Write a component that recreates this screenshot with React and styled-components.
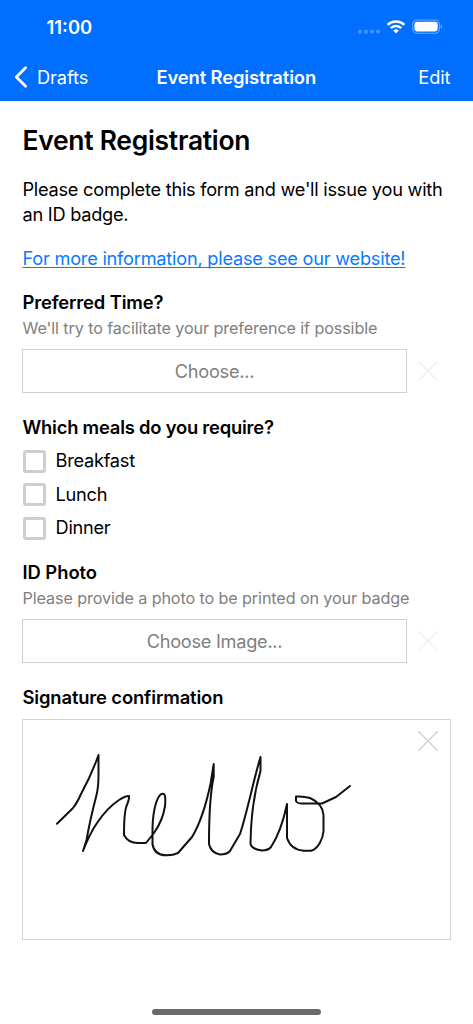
import styled, { createGlobalStyle } from 'styled-components'

const GlobalStyle = createGlobalStyle`
  * {
    box-sizing: border-box;
  }

  body {
    margin: 0;
    background: #fff;
    color: #000;
    font-family: Inter, "Liberation Sans", sans-serif;
  }

  button {
    font-family: inherit;
    margin: 0;
  }
`

const Screen = styled.div`
  width: 473px;
  height: 1024px;
  display: flex;
  flex-direction: column;
  overflow: hidden;
`

const Header = styled.header`
  flex: none;
  height: 101px;
  background: #006eff;
  color: #fff;
`

const StatusBar = styled.div`
  height: 53px;
  padding: 1px 31px 0 46.5px;
  display: flex;
  align-items: center;
  justify-content: space-between;
`

const Clock = styled.span`
  font-size: 18.4px;
  font-weight: 600;
`

const StatusIcons = styled.svg`
  display: block;
  width: 86px;
  height: 20px;
`

const NavBar = styled.nav`
  height: 47px;
  padding: 0 22.5px 0 22px;
  display: grid;
  grid-template-columns: 1fr auto 1fr;
  align-items: center;
`

const NavButton = styled.button`
  display: flex;
  align-items: center;
  gap: 9px;
  justify-self: ${props => (props.$end ? 'end' : 'start')};
  margin-left: ${props => (props.$end ? 0 : '-8px')};
  padding: 0;
  border: 0;
  background: none;
  color: #fff;
  font-size: 18.2px;
  letter-spacing: -0.05px;
`

const NavTitle = styled.span`
  font-size: 18.4px;
  font-weight: 600;
  letter-spacing: -0.12px;
`

const Form = styled.main`
  flex: 1;
  padding: 20px 22px 0 22.5px;
`

const Heading = styled.h1`
  margin: 0 0 18px;
  font-size: 26.4px;
  font-weight: 600;
  line-height: 38px;
  letter-spacing: -0.25px;
`

const Intro = styled.p`
  margin: 0 0 20px;
  font-size: 18.2px;
  line-height: 24.5px;
  white-space: nowrap;
  letter-spacing: -0.25px;
`

const InfoLink = styled.a`
  display: block;
  width: max-content;
  margin-bottom: 20px;
  color: #0a7aff;
  font-size: 18.2px;
  line-height: 24px;
  text-decoration: underline;
  text-decoration-thickness: 1px;
  text-decoration-skip-ink: none;
  text-underline-offset: 2px;
  letter-spacing: -0.23px;
`

const Field = styled.section`
  margin-bottom: ${props => props.$gap ?? 21.5}px;
`

const Label = styled.h2`
  margin: 0;
  font-size: 18.4px;
  font-weight: 600;
  line-height: 24px;
  white-space: nowrap;
  letter-spacing: ${props => props.$track ?? -0.14}px;
`

const Hint = styled.p`
  margin: 3.3px 0 10.2px;
  color: #808080;
  font-size: 16.2px;
  line-height: 22px;
  white-space: nowrap;
  letter-spacing: -0.12px;
`

const PickerRow = styled.div`
  display: flex;
  align-items: center;
  gap: 10.8px;
  margin-left: -0.5px;
`

const Picker = styled.button`
  width: 385px;
  height: 44px;
  padding: 0;
  border: 1.4px solid #d0d0d0;
  background: #fff;
  color: #808080;
  font-size: 18.2px;
  letter-spacing: -0.27px;
`

const Cross = styled.svg`
  display: block;
  width: 20px;
  height: 20px;
  fill: none;
  stroke: ${props => (props.$faint ? '#efefef' : '#cfcfcf')};
  stroke-width: 1.2;
  stroke-linecap: round;
`

const Options = styled.div`
  margin-top: 5.5px;
`

const Option = styled.label`
  height: 33.5px;
  display: flex;
  align-items: center;
  gap: 10px;
  font-size: 18.2px;
  letter-spacing: -0.25px;
`

const OptionName = styled.span`
  margin-top: -2px;
`

const Checkbox = styled.input`
  appearance: none;
  width: 23px;
  height: 23px;
  margin: 0;
  border: 3px solid #cecece;
  border-radius: 3px;
`

const SignaturePad = styled.div`
  display: flex;
  justify-content: space-between;
  align-items: flex-start;
  width: 429px;
  height: 221px;
  margin: 10px 0 0 -0.5px;
  padding-right: 11.7px;
  border: 1.4px solid #d4d4d4;

  ${Cross} {
    margin-top: 11.5px;
  }
`

const Ink = styled.svg`
  display: block;
  width: 340px;
  height: 160px;
  fill: none;
  stroke: #111;
  stroke-width: 2;
  stroke-linecap: round;
  stroke-linejoin: round;
`

const HomeIndicator = styled.div`
  flex: none;
  width: 169px;
  height: 6px;
  margin: 0 auto 9px;
  border-radius: 3px;
  background: #6a6a6a;
`

const ClearIcon = ({ faint }) => (
  <Cross $faint={faint} viewBox="0 0 20 20">
    <path d="M0.5 0.5 19.5 19.5M19.5 0.5 0.5 19.5" />
  </Cross>
)

const meals = ['Breakfast', 'Lunch', 'Dinner']

const App = () => {
  return (
    <>
      <GlobalStyle />
      <Screen>
        <Header>
          <StatusBar>
            <Clock>11:00</Clock>
            <StatusIcons viewBox="0 0 86 20" fill="#fff">
              <g opacity="0.26">
                <circle cx="4" cy="14.7" r="2.1" />
                <circle cx="10" cy="14.7" r="2.1" />
                <circle cx="16" cy="14.7" r="2.1" />
                <circle cx="22" cy="14.7" r="2.1" />
              </g>
              <g fill="none" stroke="#fff" strokeWidth="2.5">
                <path d="M31.6 7.9a12.1 12.1 0 0 1 16.8 0" />
                <path d="M34.7 11.2a7.6 7.6 0 0 1 10.6 0" />
              </g>
              <path d="M37.1 13.6a4.2 4.2 0 0 1 5.8 0L40 16.6Z" />
              <rect x="56.8" y="3" width="26.6" height="13.2" rx="4" fill="none" stroke="#fff" strokeWidth="1.1" opacity="0.42" />
              <rect x="58.5" y="4.7" width="23.2" height="9.8" rx="2.4" />
              <path d="M84.8 7.3q1.5.6 1.5 2.2t-1.5 2.2Z" opacity="0.45" />
            </StatusIcons>
          </StatusBar>
          <NavBar>
            <NavButton>
              <svg width="14" height="22" viewBox="0 0 14 22" fill="none" stroke="#fff" strokeWidth="2.8" strokeLinecap="round" strokeLinejoin="round">
                <path d="M11.6 1.8 2.4 11l9.2 9.2" />
              </svg>
              Drafts
            </NavButton>
            <NavTitle>Event Registration</NavTitle>
            <NavButton $end>Edit</NavButton>
          </NavBar>
        </Header>

        <Form>
          <Heading>Event Registration</Heading>
          <Intro>
            Please complete this form and we'll issue you with
            <br />
            an ID badge.
          </Intro>
          <InfoLink href="#">For more information, please see our website!</InfoLink>

          <Field>
            <Label>Preferred Time?</Label>
            <Hint>We'll try to facilitate your preference if possible</Hint>
            <PickerRow>
              <Picker>Choose...</Picker>
              <ClearIcon faint />
            </PickerRow>
          </Field>

          <Field $gap={14.7}>
            <Label $track={-0.22}>Which meals do you require?</Label>
            <Options>
              {meals.map(meal => (
                <Option key={meal}>
                  <Checkbox type="checkbox" />
                  <OptionName>{meal}</OptionName>
                </Option>
              ))}
            </Options>
          </Field>

          <Field>
            <Label $track={-0.05}>ID Photo</Label>
            <Hint>Please provide a photo to be printed on your badge</Hint>
            <PickerRow>
              <Picker>Choose Image...</Picker>
              <ClearIcon faint />
            </PickerRow>
          </Field>

          <Field $gap={0}>
            <Label>Signature confirmation</Label>
            <SignaturePad>
              <Ink viewBox="23 720 340 160">
                <path d="M57 823.7 73 808Q77 803 81 794Q91 776 98.5 755V775Q98.5 787 96.5 795Q90 820 86.500 840L83 851Q90 833 97 823Q107 808 119 800Q126 795.500 129 796Q129.500 799 126.500 806Q124 813 124 835Q128 843 138 843H146L154 833Q163 820 165 806Q166 794 163.500 794C158 792 153 808 152.500 828V844Q154 855 166 855.300Q173 855.500 178 853L192 837Q203 819 210.500 784L213.700 764V777Q209 798 209 844Q211 853 220 854.500Q227 854.500 230 851L240 834C247 813 254 778 260.500 757V771Q251 803 250.500 844Q252 849.500 262 850.500Q268 850.500 271 847C279 835 283 823 287 804V838Q291 850 304 850.700H311C318 849 323 839 323.500 831V815C323 807 319 802 310 798Q304 796 296 796.500V801Q297 803.500 302 803.500H322L336 797 350 786" />
              </Ink>
              <ClearIcon />
            </SignaturePad>
          </Field>
        </Form>
        <HomeIndicator />
      </Screen>
    </>
  )
}

export default App
